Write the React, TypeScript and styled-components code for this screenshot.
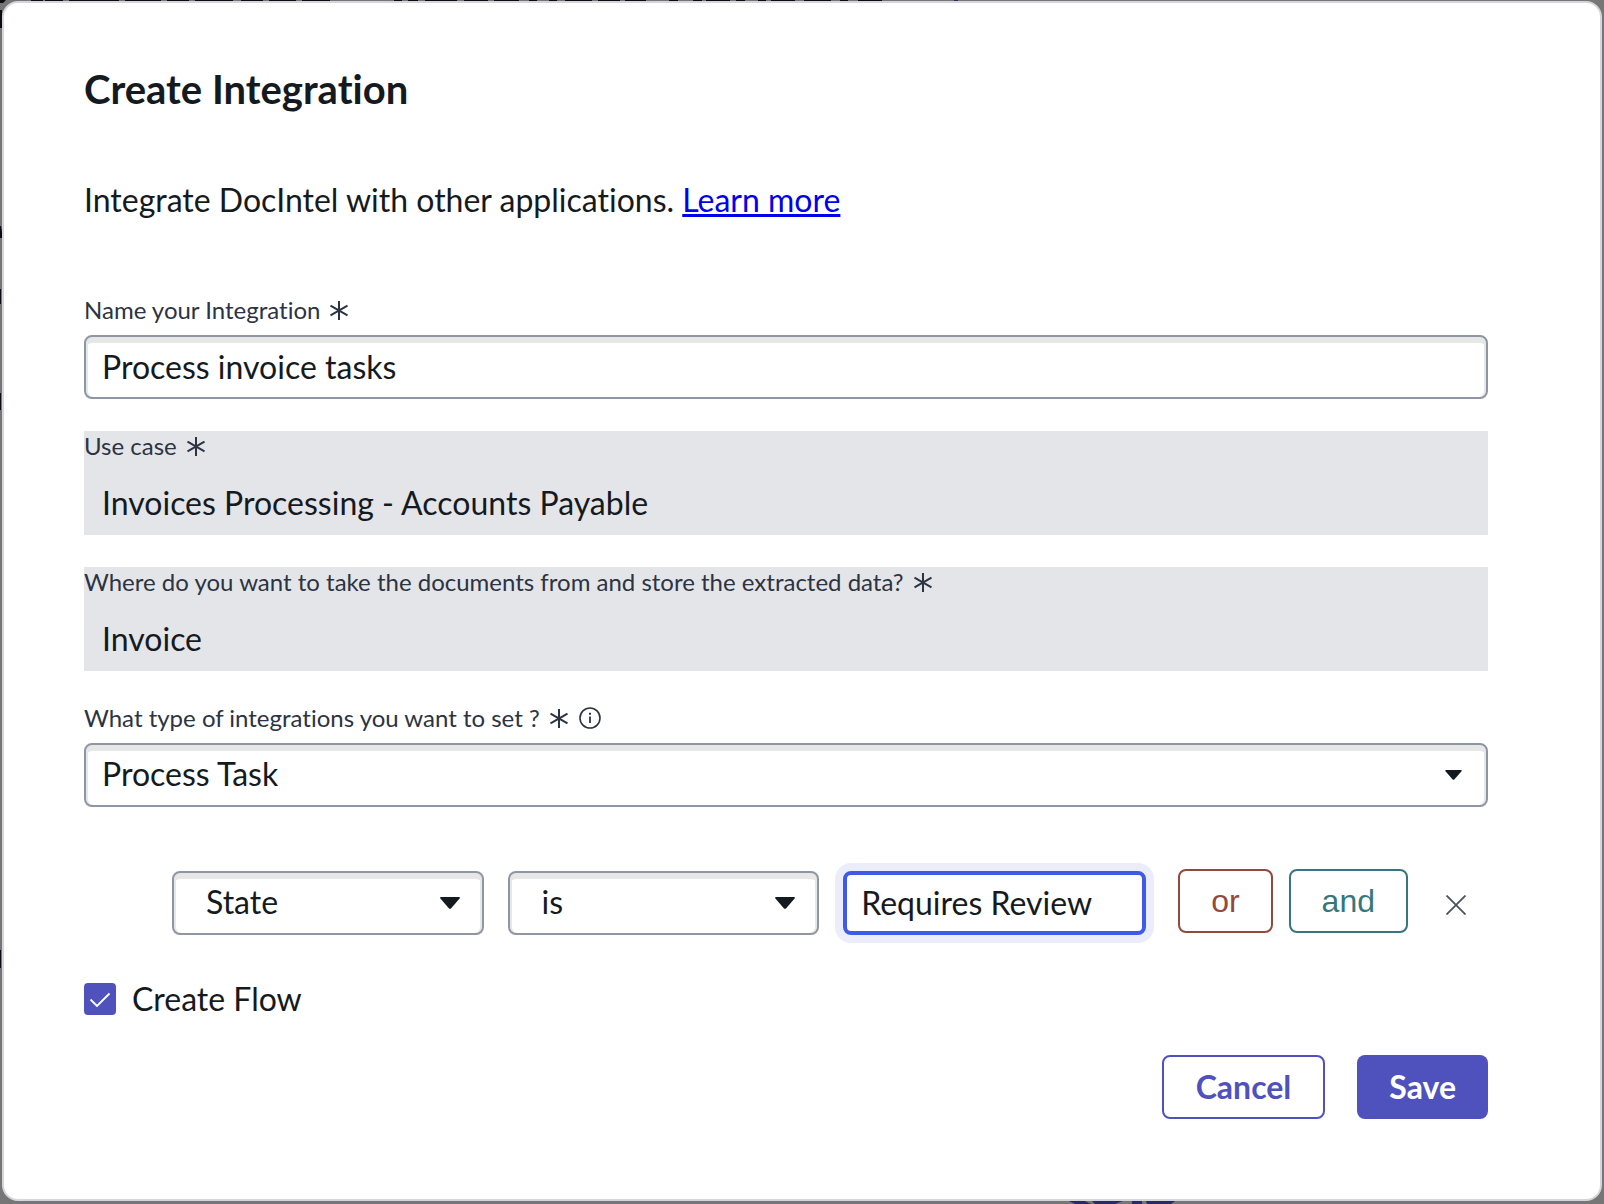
import React, { useState } from "react";
import styled, { createGlobalStyle, css } from "styled-components";

const ink = "#151a21";
const labelInk = "#2c3342";
const brand = "#4f52bd";
const fieldBorder = "#9095a3";

const GlobalStyle = createGlobalStyle`
  *, *::before, *::after { box-sizing: border-box; }
  html, body { margin: 0; }
  body {
    background: #767676;
    color: ${ink};
    font-family: Lato, "Open Sans", sans-serif;
    font-size: 32px;
    line-height: 38px;
    font-variant-ligatures: none;
  }
  button, input, select { font: inherit; color: inherit; margin: 0; }
`;

const Overlay = styled.div`
  position: relative;
  min-height: 100vh;
  padding: 1px 2px 3px;
  display: flex;
  overflow: hidden;
`;

const PageBehind = styled.svg`
  position: absolute;
  top: 0;
  left: 0;
`;

const Dialog = styled.form`
  position: relative;
  flex: 1;
  min-width: 0;
  background: #fff;
  border: 2px solid #d5d5dc;
  border-radius: 16px;
  padding: 62px 112px 80px 80px;
`;

const Title = styled.h1`
  margin: 0;
  font-size: 40px;
  line-height: 48px;
  font-weight: 700;
`;

const Intro = styled.p`
  margin: 68px 0 0;
`;

const Link = styled.a`
  color: #0000ee;
  text-decoration: underline;
`;

const Fields = styled.div`
  display: flex;
  flex-direction: column;
  gap: 32px;
  margin-top: 76px;
`;

const Field = styled.div<{ $readOnly?: boolean }>`
  display: flex;
  flex-direction: column;
  gap: 10px;
  background: ${(p) => (p.$readOnly ? "#e4e5e9" : "transparent")};
`;

const LabelRow = styled.div`
  display: flex;
  align-items: center;
  gap: 10px;
  font-size: 24px;
  line-height: 30px;
  color: ${labelInk};
`;

const Label = styled.label`
  display: flex;
  align-items: center;
  gap: 10px;
`;

const control = css`
  width: 100%;
  height: 64px;
  border: 2px solid ${fieldBorder};
  border-radius: 8px;
  background: #fff;
  box-shadow: inset 0 6px 0 #e6e8e8, inset 2px 0 0 #e6e8e8, inset -2px 0 0 #e6e8e8;
  padding: 0 16px 2px;
  outline: none;
`;

const TextInput = styled.input<{ $focused?: boolean }>`
  ${control}
  ${(p) =>
    p.$focused &&
    css`
      border: 4px solid #3f5ae8;
      box-shadow: 0 0 0 8px #ebedfc;
      padding: 0 14px 2px;
    `}
`;

const PlainInput = styled.input`
  width: 100%;
  height: 64px;
  border: 0;
  background: transparent;
  padding: 0 18px 2px;
  outline: none;
`;

const SelectBox = styled.div`
  display: grid;
  align-items: center;
  min-width: 0;
  > * { grid-area: 1 / 1; }
`;

const Select = styled.select<{ $inset?: boolean }>`
  ${control}
  appearance: none;
  padding: 0 ${(p) => (p.$inset ? 32 : 16)}px 2px;
`;

const Caret = styled.svg<{ $inset?: boolean }>`
  justify-self: end;
  margin-right: ${(p) => (p.$inset ? 24 : 26)}px;
  pointer-events: none;
`;

const ConditionRow = styled.div`
  display: flex;
  align-items: flex-start;
  margin-top: 62px;
  padding: 0 22px 0 88px;
`;

const ConditionFields = styled.div`
  flex: 1;
  min-width: 0;
  display: grid;
  grid-template-columns: 36fr 36fr 35fr;
  gap: 24px;
  padding-top: 2px;
`;

const ConditionActions = styled.div`
  display: flex;
  align-items: center;
  gap: 16px;
  margin-left: 32px;
`;

const JoinButton = styled.button<{ $color: string }>`
  height: 64px;
  padding: 0 31px;
  border: 2px solid ${(p) => p.$color};
  border-radius: 8px;
  background: #fff;
  color: ${(p) => p.$color};
  font-family: "Liberation Sans", Arial, sans-serif;
`;

const IconButton = styled.button`
  display: flex;
  align-items: center;
  height: 72px;
  margin-left: 38px;
  padding: 0;
  border: 0;
  background: none;
`;

const CheckRow = styled.label`
  display: flex;
  align-items: center;
  width: fit-content;
  gap: 16px;
  margin-top: 39px;
`;

const CheckBox = styled.span`
  display: grid;
  > * { grid-area: 1 / 1; }
  svg { pointer-events: none; }
`;

const CheckInput = styled.input`
  appearance: none;
  width: 32px;
  height: 32px;
  border: 2px solid ${brand};
  border-radius: 4px;
  background: #fff;
  &:checked { background: ${brand}; }
`;

const Footer = styled.div`
  display: flex;
  justify-content: flex-end;
  gap: 32px;
  margin-top: 37px;
`;

const Button = styled.button<{ $primary?: boolean }>`
  height: 64px;
  padding: 0 32px;
  border: ${(p) => (p.$primary ? "0" : `2px solid ${brand}`)};
  border-radius: 8px;
  background: ${(p) => (p.$primary ? brand : "#fff")};
  color: ${(p) => (p.$primary ? "#fff" : brand)};
  font-weight: 700;
`;

const Required = () => (
  <svg width="18" height="20" viewBox="0 0 18 20" fill="none" stroke={labelInk} strokeWidth="2" aria-hidden="true">
    <path d="M9 1V20M0.5 5.7L17.5 15.3M17.5 5.7L0.5 15.3" />
  </svg>
);

const Info = () => (
  <svg width="24" height="24" viewBox="0 0 24 24" fill="none" stroke={labelInk} aria-hidden="true">
    <circle cx="12" cy="12" r="10" strokeWidth="1.6" />
    <path d="M12 10.5V17" strokeWidth="1.8" />
    <path d="M12 6.8V8.8" strokeWidth="2" />
  </svg>
);

type SelectFieldProps = { id: string; value: string; label: string; inset?: boolean };

function SelectField({ id, value, label, inset }: SelectFieldProps) {
  return (
    <SelectBox>
      <Select id={id} aria-label={label} $inset={inset} defaultValue={value}>
        <option>{value}</option>
      </Select>
      <Caret $inset={inset} width={inset ? 20 : 17} height={inset ? 12 : 10} viewBox="0 0 20 12" aria-hidden="true">
        <path d="M0.8 0H19.2Q20.4 0.6 19.4 1.8L11.2 11.2Q10 12.4 8.8 11.2L0.6 1.8Q-0.4 0.6 0.8 0Z" fill={ink} />
      </Caret>
    </SelectBox>
  );
}

const headingMarks = [
  [31, 12], [45, 18], [69, 50], [125, 36], [167, 22], [195, 38], [241, 22], [269, 27], [302, 28],
  [394, 8], [408, 10], [425, 32], [464, 24], [494, 25], [529, 8], [549, 8], [565, 27], [598, 22],
  [625, 21], [669, 9], [693, 9], [706, 24], [736, 9], [758, 8], [771, 24], [804, 27], [840, 8], [858, 24],
];

export default function App() {
  const [name, setName] = useState("Process invoice tasks");
  const [value, setValue] = useState("Requires Review");
  const [flow, setFlow] = useState(true);

  return (
    <>
      <GlobalStyle />
      <Overlay>
        <PageBehind width="100%" height="100%" aria-hidden="true">
          {headingMarks.map(([x, w]) => (
            <rect key={x} x={x} y="0" width={w} height="1" fill="#0b0c10" />
          ))}
          <rect x="954" y="0" width="4" height="1" fill="#282a60" />
          <path d="M0 0H6L3 3H0ZM0 10H2V28H0ZM0 226H1L2 232V238H0ZM0 289H1V304H0ZM0 393H1V410H0ZM0 950H1V968H0Z" fill="#0b0c10" />
          <path d="M1069 1201h16l6 3h-16zM1092 1201h31l-8 3h-20zM1132 1201h10v3h-10zM1146 1201h29l-4 3h-24z" fill="#282a60" />
        </PageBehind>
        <Dialog onSubmit={(e) => e.preventDefault()}>
          <Title>Create Integration</Title>
          <Intro>
            Integrate DocIntel with other applications. <Link href="#learn">Learn more</Link>
          </Intro>

          <Fields>
            <Field>
              <LabelRow>
                <Label htmlFor="name">Name your Integration <Required /></Label>
              </LabelRow>
              <TextInput id="name" value={name} onChange={(e) => setName(e.target.value)} />
            </Field>
            <Field $readOnly>
              <LabelRow>
                <Label htmlFor="usecase">Use case <Required /></Label>
              </LabelRow>
              <PlainInput id="usecase" readOnly value="Invoices Processing - Accounts Payable" />
            </Field>
            <Field $readOnly>
              <LabelRow>
                <Label htmlFor="source">
                  Where do you want to take the documents from and store the extracted data? <Required />
                </Label>
              </LabelRow>
              <PlainInput id="source" readOnly value="Invoice" />
            </Field>
            <Field>
              <LabelRow>
                <Label htmlFor="type">What type of integrations you want to set ? <Required /></Label>
                <Info />
              </LabelRow>
              <SelectField id="type" label="Integration type" value="Process Task" />
            </Field>
          </Fields>

          <ConditionRow>
            <ConditionFields>
              <SelectField id="field" label="Field" value="State" inset />
              <SelectField id="operator" label="Operator" value="is" inset />
              <TextInput
                $focused
                aria-label="Value"
                value={value}
                onChange={(e) => setValue(e.target.value)}
              />
            </ConditionFields>
            <ConditionActions>
              <JoinButton type="button" $color="#934a3c">or</JoinButton>
              <JoinButton type="button" $color="#36777d">and</JoinButton>
            </ConditionActions>
            <IconButton type="button" aria-label="Remove condition">
              <svg width="20" height="20" viewBox="0 0 20 20" stroke="#4a5060" strokeWidth="1.8" aria-hidden="true">
                <path d="M0.5 0.5L19.5 19.5M19.5 0.5L0.5 19.5" />
              </svg>
            </IconButton>
          </ConditionRow>

          <CheckRow>
            <CheckBox>
              <CheckInput type="checkbox" checked={flow} onChange={(e) => setFlow(e.target.checked)} />
              <svg width="32" height="32" viewBox="0 0 32 32" fill="none" stroke="#fff" strokeWidth="1.8" aria-hidden="true">
                <path d="M6.5 16.5L13 23L25.5 10.5" />
              </svg>
            </CheckBox>
            Create Flow
          </CheckRow>

          <Footer>
            <Button type="button">Cancel</Button>
            <Button type="submit" $primary>Save</Button>
          </Footer>
        </Dialog>
      </Overlay>
    </>
  );
}
